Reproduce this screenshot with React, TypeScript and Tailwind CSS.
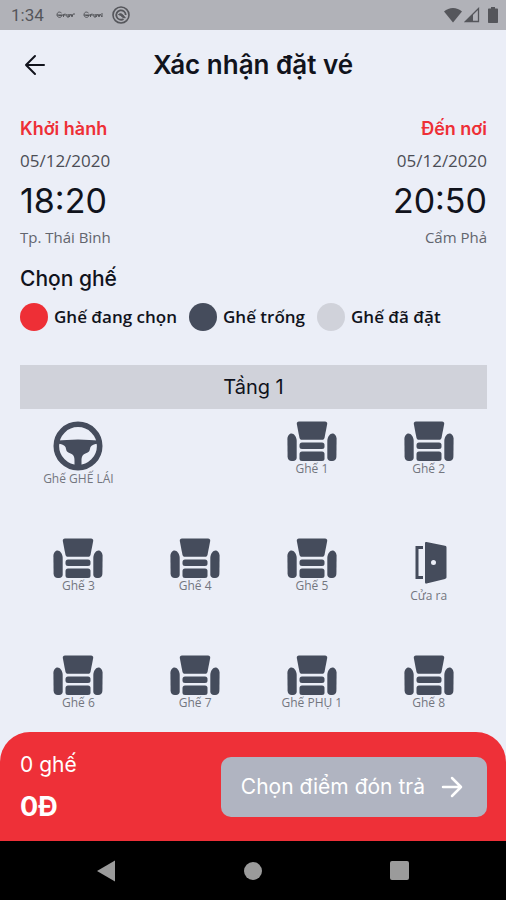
import { useState } from 'react';

type CellKind = 'driver' | 'seat' | 'door' | 'empty';

type Cell = {
  id: string;
  kind: CellKind;
  label?: string;
};

const LEGEND = [
  { id: 'selected', label: 'Ghế đang chọn', color: 'bg-[#ee2f36]' },
  { id: 'free', label: 'Ghế trống', color: 'bg-[#454c5c]' },
  { id: 'booked', label: 'Ghế đã đặt', color: 'bg-[#d0d2da]' },
];

const CELLS: Cell[] = [
  { id: 'driver', kind: 'driver', label: 'Ghế GHẾ LÁI' },
  { id: 'aisle', kind: 'empty' },
  { id: 's1', kind: 'seat', label: 'Ghế 1' },
  { id: 's2', kind: 'seat', label: 'Ghế 2' },
  { id: 's3', kind: 'seat', label: 'Ghế 3' },
  { id: 's4', kind: 'seat', label: 'Ghế 4' },
  { id: 's5', kind: 'seat', label: 'Ghế 5' },
  { id: 'door', kind: 'door', label: 'Cửa ra' },
  { id: 's6', kind: 'seat', label: 'Ghế 6' },
  { id: 's7', kind: 'seat', label: 'Ghế 7' },
  { id: 'extra1', kind: 'seat', label: 'Ghế PHỤ 1' },
  { id: 's8', kind: 'seat', label: 'Ghế 8' },
];

function SeatIcon() {
  return (
    <svg className="w-[50px] h-10" viewBox="0 0 50 40" fill="currentColor" aria-hidden="true">
      <path d="M12 0.500h26c1.600 0 2.400 1 2.200 2.400l-2.600 13.500c-.3 1.500-1.100 2.300-2.600 2.300H15c-1.500 0-2.300-.8-2.600-2.300l-2.600-13.500C9.600 1.500 10.400 .5 12 .5z" />
      <rect x="12.500" y="21.500" width="25" height="6.500" rx="2.500" />
      <rect x="12.500" y="30.500" width="25" height="9.500" rx="2.500" />
      <path d="M4.500 12.500c2.500 0 5.200 3.500 5.200 7.500v16.500c0 2.200-1.500 3.500-3.500 3.500h-1.500C2.500 40 .8 38.500 .6 36L.4 18c0-3 1.800-5.500 4.100-5.500z" />
      <path d="M45.500 12.500c-2.500 0-5.200 3.500-5.200 7.500v16.500c0 2.200 1.500 3.500 3.500 3.500h1.500c2.200 0 3.900-1.500 4.100-4l.2-18c0-3-1.800-5.500-4.100-5.500z" />
    </svg>
  );
}

function WheelIcon() {
  return (
    <svg className="w-[50px] h-[50px]" viewBox="0 0 50 50" aria-hidden="true">
      <circle cx="25" cy="25" r="21.700" fill="none" stroke="currentColor" strokeWidth="5.600" />
      <path
        fill="currentColor"
        d="M5 19.500c5 0 12-1 20-1s15 1 20 1v3.300c-3.500.2-6.500 1.200-7.500 3.200-.6 1.500-.5 3-1.500 4.500-1.500 2-4.500 1.500-6 3.500-1.500 2-1.500 4-1.500 6v6h-7v-6c0-2 0-4-1.500-6-1.500-2-4.500-1.500-6-3.500-1-1.500-.9-3-1.500-4.500-1-2-4-3-7.500-3.200z"
      />
    </svg>
  );
}

function DoorIcon() {
  return (
    <svg className="w-[50px] h-[50px]" viewBox="0 0 50 50" aria-hidden="true">
      <path d="M19 9.500h-6v30h6" fill="none" stroke="currentColor" strokeWidth="3" />
      <path
        fill="currentColor"
        fillRule="evenodd"
        d="M21 5.300c0-1 .6-1.500 1.500-1.300l18.500 3.800c1 .2 1.500.8 1.500 1.800v29.500c0 1-.5 1.600-1.500 1.900l-18.500 4.600c-.9.200-1.500-.3-1.500-1.300zM29.500 22a2.500 2.500 0 1 0 0 5 2.500 2.500 0 0 0 0-5z"
      />
    </svg>
  );
}

function ArrowIcon({ className }: { className: string }) {
  return (
    <svg
      className={className}
      viewBox="0 0 22 22"
      fill="none"
      stroke="currentColor"
      strokeLinecap="round"
      strokeLinejoin="round"
      aria-hidden="true"
    >
      <path d="M2 11h18M11 2l9 9-9 9" />
    </svg>
  );
}

function StatusBar() {
  return (
    <div className="h-[30px] shrink-0 bg-[#b1b2b8] text-[#55565b] flex items-center pl-[11px] pr-2">
      <span className="text-[17px] leading-5 font-[Roboto,sans-serif]">1:34</span>
      <svg
        className="ml-3 w-12 h-2"
        viewBox="0 0 48 8"
        fill="none"
        stroke="currentColor"
        strokeWidth="1"
        aria-hidden="true"
      >
        <path d="M5.500 2C3 0 1 1.500 1 4s4 3.500 5 .5H2.500M7.500 6V3.500L9.500 3M11 3v3h2V3v3l2-3 1 3 1-3 2 0M1 4h10" />
        <path d="M32.500 2C30 0 28 1.500 28 4s4 3.500 5 .5H29.500M34.500 6V3.500L36.500 3M38 3v3h2V3v3l2-3 1 3 1-3 2 3V2M28 4h10" />
      </svg>
      <svg className="ml-2 w-[18px] h-[18px]" viewBox="0 0 18 18" fill="none" stroke="currentColor" aria-hidden="true">
        <circle cx="9" cy="9" r="8" strokeWidth="1.600" />
        <path d="M11.500 13a4.700 4.700 0 1 1 2.200-4" strokeWidth="1.800" />
        <path d="M6.500 8.500c2-1.800 4-.8 6.800 3.300l-2.500-.3-2-2z" fill="currentColor" strokeWidth="1" />
      </svg>
      <div className="ml-auto flex items-center">
        <svg className="w-[18px] h-4" viewBox="0 0 18 16" fill="currentColor" aria-hidden="true">
          <path d="M0 4.500C5-.3 13-.3 18 4.500L9 15.500z" />
        </svg>
        <svg className="ml-0.5 w-4 h-4" viewBox="0 0 16 16" aria-hidden="true">
          <path d="M14.500 1.500v13h-13z" fill="none" stroke="currentColor" strokeWidth="1.300" />
          <path d="M9 7v8H1z" fill="currentColor" />
        </svg>
        <svg className="ml-2 w-[10px] h-4" viewBox="0 0 10 16" fill="currentColor" aria-hidden="true">
          <path d="M3 0h4v1.500h2c.6 0 1 .4 1 1V15c0 .6-.4 1-1 1H1c-.6 0-1-.4-1-1V2.500c0-.6.4-1 1-1h2z" />
        </svg>
      </div>
    </div>
  );
}

function TripStop({ title, date, time, place }: { title: string; date: string; time: string; place: string }) {
  return (
    <div>
      <h2 className="text-lg leading-6 font-semibold text-[#ee2f36] font-[Inter,sans-serif]">{title}</h2>
      <p className="mt-2 text-[17px] leading-6 text-[#4b4d55]">{date}</p>
      <p className="mt-2 text-[34px] leading-10 text-[#11131c] font-[Inter,sans-serif]">{time}</p>
      <p className="mt-1.5 text-[15px] leading-5 text-[#62656e]">{place}</p>
    </div>
  );
}

function SeatCell({ cell, selected, onToggle }: { cell: Cell; selected: boolean; onToggle: () => void }) {
  if (cell.kind === 'empty') return <div className="aspect-square" />;

  const label = <span className="text-xs leading-4 text-[#73767f] whitespace-nowrap">{cell.label}</span>;

  if (cell.kind === 'seat') {
    return (
      <button
        type="button"
        onClick={onToggle}
        aria-pressed={selected}
        className={`aspect-square pt-[11px] flex flex-col items-center ${
          selected ? 'text-[#ee2f36]' : 'text-[#454c5c]'
        }`}
      >
        <SeatIcon />
        {label}
      </button>
    );
  }

  return (
    <div className="aspect-square pt-[11px] flex flex-col items-center text-[#454c5c]">
      {cell.kind === 'driver' ? <WheelIcon /> : <DoorIcon />}
      {label}
    </div>
  );
}

export default function App() {
  const [selected, setSelected] = useState<string[]>([]);

  const toggleSeat = (id: string) => {
    setSelected(prev => (prev.includes(id) ? prev.filter(s => s !== id) : [...prev, id]));
  };

  return (
    <div className="h-screen flex flex-col bg-[#ebeef7] text-[#11131c] font-['Open_Sans',sans-serif]">
      <StatusBar />

      {/* Header */}
      <header className="shrink-0 h-[70px] px-6 grid grid-cols-[24px_1fr_24px] items-center">
        <button type="button" aria-label="Quay lại">
          <ArrowIcon className="w-[22px] h-[22px] rotate-180 stroke-2" />
        </button>
        <h1 className="text-center text-[26px] leading-8 font-semibold font-[Inter,sans-serif]">Xác nhận đặt vé</h1>
      </header>

      <main className="flex-1 min-h-0 overflow-y-auto [scrollbar-width:none] pl-5 pr-[19px] pt-[17px]">
        {/* Trip */}
        <section className="flex justify-between">
          <TripStop title="Khởi hành" date="05/12/2020" time="18:20" place="Tp. Thái Bình" />
          <div className="text-right">
            <TripStop title="Đến nơi" date="05/12/2020" time="20:50" place="Cẩm Phả" />
          </div>
        </section>

        {/* Legend */}
        <h2 className="mt-[18px] text-[21px] leading-7 font-medium font-[Inter,sans-serif]">Chọn ghế</h2>
        <ul className="mt-2.5 flex flex-wrap gap-x-3">
          {LEGEND.map(item => (
            <li key={item.id} className="flex items-center gap-1.5 text-[17px] leading-7 font-semibold">
              <span className={`w-7 h-7 rounded-full ${item.color}`} />
              {item.label}
            </li>
          ))}
        </ul>

        {/* Floor */}
        <h3 className="mt-[34px] h-11 flex items-center justify-center bg-[#d0d2da] text-[20px] leading-7 font-[Inter,sans-serif]">
          Tầng 1
        </h3>
        <div className="mt-px grid grid-cols-4">
          {CELLS.map(cell => (
            <SeatCell
              key={cell.id}
              cell={cell}
              selected={selected.includes(cell.id)}
              onToggle={() => toggleSeat(cell.id)}
            />
          ))}
        </div>
      </main>

      {/* Summary */}
      <footer className="shrink-0 h-[109px] pl-5 pr-[19px] flex items-center justify-between rounded-t-[30px] bg-[#ee3038] text-white font-[Inter,sans-serif]">
        <div>
          <p className="text-[21px] leading-7">{selected.length} ghế</p>
          <p className="mt-3 text-[27px] leading-8 font-bold">0Đ</p>
        </div>
        <button type="button" className="h-[60px] pl-5 pr-6 flex items-center gap-4 rounded-[10px] bg-[#b0b4c1] text-[21px] leading-7">
          Chọn điểm đón trả
          <ArrowIcon className="w-[22px] h-[22px] stroke-[2.5]" />
        </button>
      </footer>

      {/* System navigation */}
      <nav className="shrink-0 h-[59px] px-[97px] flex items-center justify-between bg-black text-[#9b9b9b]">
        <button type="button" aria-label="Back">
          <svg className="w-[18px] h-[22px]" viewBox="0 0 18 22" fill="currentColor" aria-hidden="true">
            <path d="M18 0.500v21L0 11z" />
          </svg>
        </button>
        <button type="button" aria-label="Home" className="w-[18px] h-[18px] rounded-full bg-[#9b9b9b]" />
        <button type="button" aria-label="Recents" className="w-[19px] h-[19px] rounded-[2px] bg-[#9b9b9b]" />
      </nav>
    </div>
  );
}
